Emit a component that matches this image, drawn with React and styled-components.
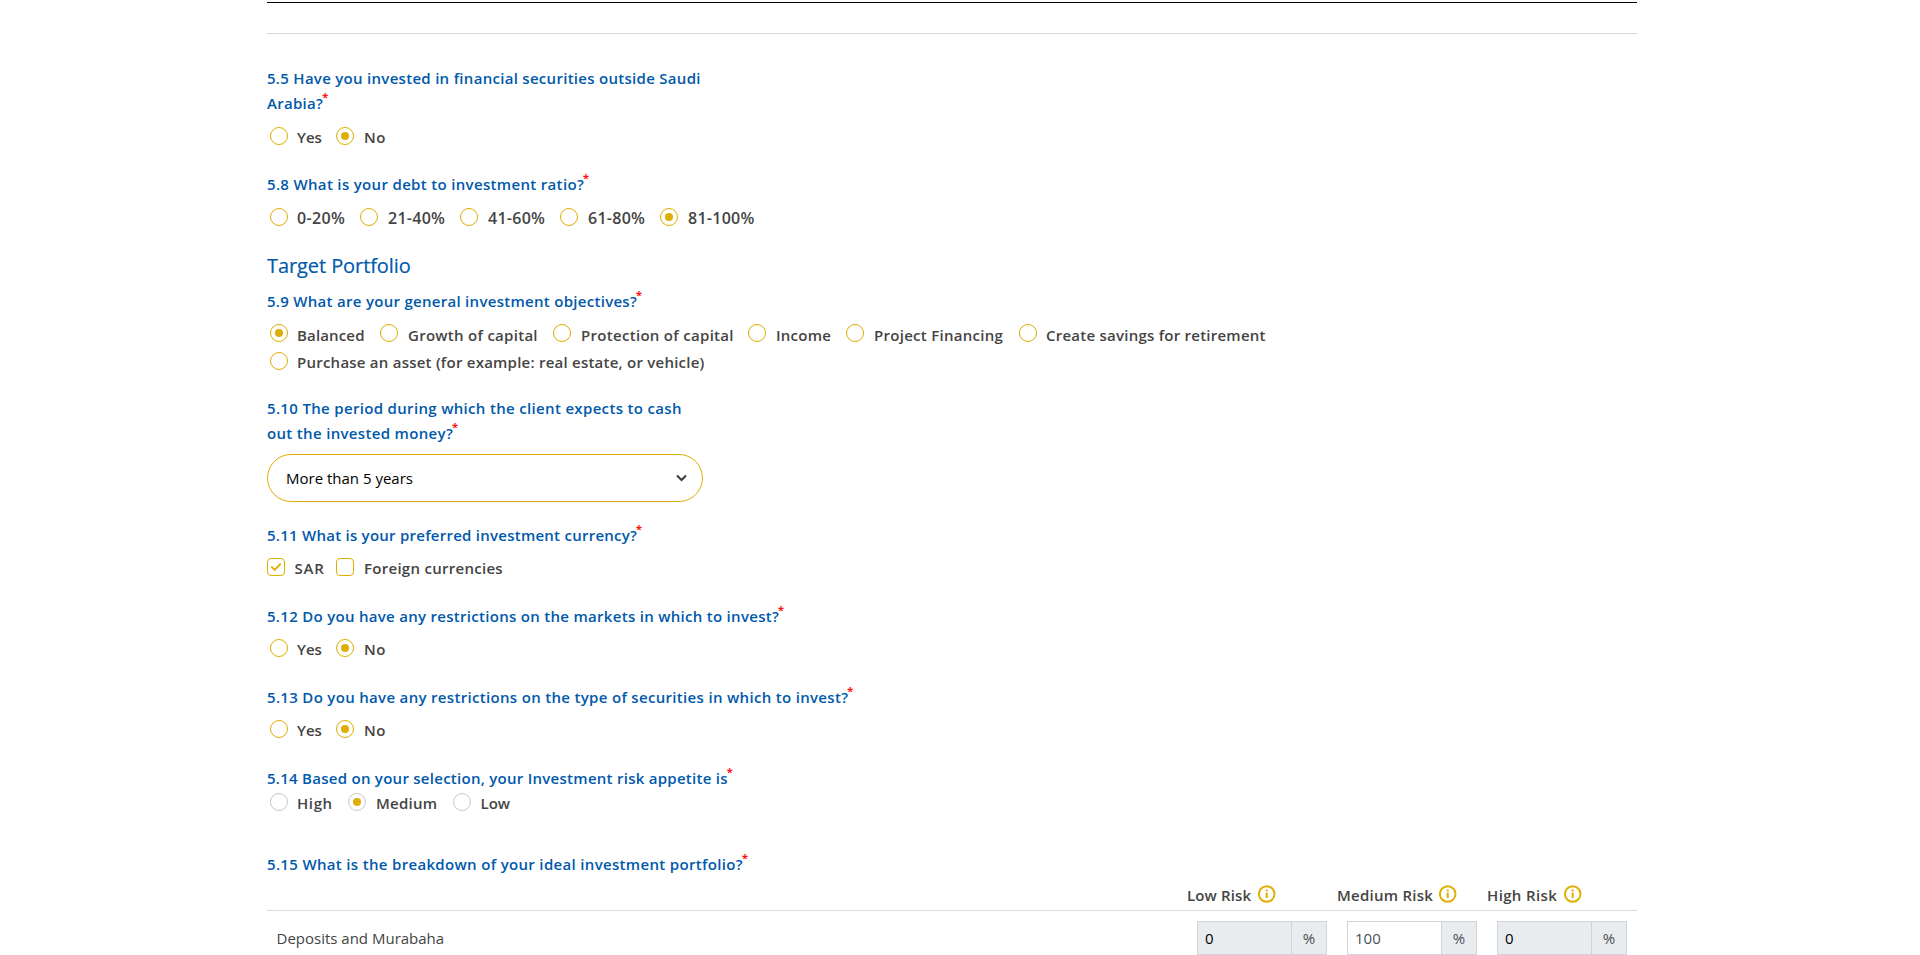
import React from "react";
import styled, { createGlobalStyle } from "styled-components";

const blue = "#0059ab";
const gold = "#deae00";
const ink = "#444444";

const GlobalStyle = createGlobalStyle`
  * { box-sizing: border-box; }
  html { overflow: hidden; }
  body {
    margin: 0;
    background: #fff;
    color: ${ink};
    font-family: "Open Sans", "Noto Sans", sans-serif;
    font-size: 15px;
    line-height: 25px;
  }
`;

const Page = styled.main`
  width: 1370px;
  height: 955px;
  margin-left: 267px;
  padding-top: 2px;
  overflow: hidden;
`;

const SolidRule = styled.div`
  height: 1px;
  background: #000;
`;

const SoftRule = styled.div`
  height: 1px;
  margin-top: 30px;
  background: #d9d9d9;
`;

const Section = styled.section`
  margin-top: ${(p) => p.$top}px;
`;

const Heading = styled.h2`
  margin: 22px 0 0;
  height: 27px;
  font-size: 20px;
  line-height: 26px;
  font-weight: 400;
  letter-spacing: -0.08px;
  color: ${blue};
  -webkit-text-stroke: 0.2px ${blue};
`;

const Question = styled.p`
  margin: 0;
  height: ${(p) => (p.$lines || 1) * 25}px;
  font-weight: 600;
  white-space: nowrap;
  color: ${blue};
  letter-spacing: ${(p) => p.$track || 0.3}px;
`;

const Required = styled.span`
  margin-left: -1px;
  font-size: 11px;
  font-weight: 700;
  line-height: 0;
  letter-spacing: 0;
  vertical-align: 8px;
  color: #ff1010;
`;

const OptionRow = styled.div`
  display: flex;
  height: ${(p) => p.$height || 26}px;
  margin-top: ${(p) => p.$top ?? 8}px;
  padding-left: ${(p) => (p.$flush ? 0 : 3)}px;
`;

const Option = styled.label`
  display: flex;
  flex: none;
  gap: ${(p) => p.$gap || 9}px;
  width: ${(p) => (p.$width ? `${p.$width}px` : "auto")};
`;

const OptionText = styled.span`
  font-size: ${(p) => (p.$numeric ? 16 : 15)}px;
  font-weight: 600;
  line-height: ${(p) => (p.$low ? 28 : 26)}px;
  white-space: nowrap;
  letter-spacing: ${(p) => p.$track || 0}px;
`;

const RadioMark = styled.span`
  display: flex;
  align-items: center;
  justify-content: center;
  flex: none;
  width: 18px;
  height: 18px;
  margin-top: 3px;
  border: 1px solid ${(p) => (p.$muted ? "#c8c8c8" : gold)};
  border-radius: 50%;

  &::after {
    content: "";
    width: 8px;
    height: 8px;
    border-radius: 50%;
    background: ${(p) => (p.$on ? gold : "transparent")};
  }
`;

const CheckMark = styled.span`
  display: flex;
  align-items: center;
  justify-content: center;
  flex: none;
  width: 18px;
  height: 18px;
  margin-top: 3px;
  border: 1px solid ${gold};
  border-radius: 4px;
`;

const Select = styled.div`
  display: flex;
  align-items: center;
  justify-content: space-between;
  width: 436px;
  height: 48px;
  margin-top: 8px;
  padding: 0 15px 0 18px;
  border: 1px solid ${gold};
  border-radius: 24px;
  color: #000;
`;

const HeaderRow = styled.div`
  display: grid;
  grid-template-columns: 1fr repeat(3, 150px);
  height: 34px;
  border-bottom: 1px solid #d9dcdf;
`;

const HeaderCell = styled.div`
  display: flex;
  align-items: flex-start;
  gap: ${(p) => p.$gap}px;
  font-weight: 600;
  line-height: 37px;
  white-space: nowrap;
  letter-spacing: ${(p) => p.$track}px;

  svg { margin-top: 8px; flex: none; }
`;

const BodyRow = styled.div`
  display: grid;
  grid-template-columns: 1fr repeat(3, 150px);
  padding-top: 10px;
`;

const RowLabel = styled.div`
  padding-left: 9.5px;
  line-height: 35px;
`;

const PercentField = styled.div`
  display: flex;
  width: 130px;
  height: 34px;
  margin-left: 10px;
  border: 1px solid #ced4da;
  background: #e9ecef;
  line-height: 32px;
`;

const FieldValue = styled.span`
  width: 94px;
  padding-left: 7px;
  border-right: 1px solid #ced4da;
  background: ${(p) => (p.$editable ? "#fff" : "#e9ecef")};
  color: ${(p) => (p.$editable ? "#495057" : "#000")};
`;

const FieldUnit = styled.span`
  flex: 1;
  text-align: center;
  color: #495057;
`;

const Star = () => <Required>*</Required>;

const Radio = ({ children, on, muted, width, track, low, gap, numeric }) => (
  <Option $width={width} $gap={gap}>
    <RadioMark $on={on} $muted={muted} />
    <OptionText $track={track} $low={low} $numeric={numeric}>{children}</OptionText>
  </Option>
);

const Check = ({ children, on, width, track, gap }) => (
  <Option $width={width} $gap={gap}>
    <CheckMark>
      {on && (
        <svg width="12" height="10" viewBox="0 0 12 10" fill="none">
          <path d="M1.3 4.6 4.7 7.9 10.7 1.6" stroke={gold} strokeWidth="2" />
        </svg>
      )}
    </CheckMark>
    <OptionText $track={track}>{children}</OptionText>
  </Option>
);

const YesNo = ({ top }) => (
  <OptionRow $top={top}>
    <Radio width={66}>Yes</Radio>
    <Radio on gap={10} track={0.4}>No</Radio>
  </OptionRow>
);

const InfoIcon = () => (
  <svg width="18" height="18" viewBox="0 0 18 18" fill="none">
    <circle cx="8.7" cy="9" r="7.8" stroke={gold} strokeWidth="1.9" />
    <path d="M8.7 7.6V13" stroke={gold} strokeWidth="2" />
    <path d="M8.7 4.5V6.4" stroke={gold} strokeWidth="2" />
  </svg>
);

const Percent = ({ value, editable }) => (
  <PercentField>
    <FieldValue $editable={editable}>{value}</FieldValue>
    <FieldUnit>%</FieldUnit>
  </PercentField>
);

export default function App() {
  return (
    <>
      <GlobalStyle />
      <Page>
        <SolidRule />
        <SoftRule />

        <Section $top={32}>
          <Question $lines={2} $track={0.29}>
            5.5 Have you invested in financial securities outside Saudi
            <br />
            Arabia?<Star />
          </Question>
          <YesNo />
        </Section>

        <Section $top={22}>
          <Question $track={0.33}>
            5.8 What is your debt to investment ratio?<Star />
          </Question>
          <OptionRow>
            <Radio numeric width={90} track={0.38}>0-20%</Radio>
            <Radio numeric gap={10} width={100} track={0.27}>21-40%</Radio>
            <Radio numeric gap={10} width={100} track={0.27}>41-60%</Radio>
            <Radio numeric gap={10} width={100} track={0.27}>61-80%</Radio>
            <Radio numeric gap={10} on track={0.27}>81-100%</Radio>
          </OptionRow>
        </Section>

        <Heading>Target Portfolio</Heading>

        <Section $top={9}>
          <Question $track={0.29}>
            5.9 What are your general investment objectives?<Star />
          </Question>
          <OptionRow $top={7} $height={28}>
            <Radio on low width={110} track={0.15}>Balanced</Radio>
            <Radio low gap={10} width={173} track={0.28}>Growth of capital</Radio>
            <Radio low width={195} gap={10} track={0.3}>Protection of capital</Radio>
            <Radio low width={98} gap={10} track={0.25}>Income</Radio>
            <Radio low width={173} gap={10} track={0.28}>Project Financing</Radio>
            <Radio low track={0.24}>Create savings for retirement</Radio>
          </OptionRow>
          <OptionRow $top={0}>
            <Radio track={0.235}>Purchase an asset (for example: real estate, or vehicle)</Radio>
          </OptionRow>
        </Section>

        <Section $top={21}>
          <Question $lines={2} $track={0.33}>
            5.10 The period during which the client expects to cash
            <br />
            out the invested money?<Star />
          </Question>
          <Select>
            More than 5 years
            <svg width="11" height="8" viewBox="0 0 11 8" fill="none">
              <path d="M1 1.5 5.5 6 10 1.5" stroke="#3c3c3c" strokeWidth="2" />
            </svg>
          </Select>
        </Section>

        <Section $top={21}>
          <Question $track={0.25}>
            5.11 What is your preferred investment currency?<Star />
          </Question>
          <OptionRow $top={7} $flush>
            <Check on width={69} gap={9.5} track={0.75}>SAR</Check>
            <Check gap={10} track={0.28}>Foreign currencies</Check>
          </OptionRow>
        </Section>

        <Section $top={23}>
          <Question $track={0.295}>
            5.12 Do you have any restrictions on the markets in which to invest?<Star />
          </Question>
          <YesNo top={7} />
        </Section>

        <Section $top={23}>
          <Question $track={0.32}>
            5.13 Do you have any restrictions on the type of securities in which to invest?<Star />
          </Question>
          <YesNo top={7} />
        </Section>

        <Section $top={23}>
          <Question $track={0.27}>
            5.14 Based on your selection, your Investment risk appetite is<Star />
          </Question>
          <OptionRow $top={-1}>
            <Radio muted width={78} track={0.6}>High</Radio>
            <Radio muted on gap={10} width={105} track={0.25}>Medium</Radio>
            <Radio muted gap={9.5}>Low</Radio>
          </OptionRow>
        </Section>

        <Section $top={36}>
          <Question $track={0.33}>
            5.15 What is the breakdown of your ideal investment portfolio?<Star />
          </Question>
          <HeaderRow>
            <span />
            <HeaderCell $gap={7} $track={0.15}>Low Risk <InfoIcon /></HeaderCell>
            <HeaderCell $gap={6} $track={0.25}>Medium Risk <InfoIcon /></HeaderCell>
            <HeaderCell $gap={6.5} $track={0.36}>High Risk <InfoIcon /></HeaderCell>
          </HeaderRow>
          <BodyRow>
            <RowLabel>Deposits and Murabaha</RowLabel>
            <Percent value="0" />
            <Percent value="100" editable />
            <Percent value="0" />
          </BodyRow>
        </Section>
      </Page>
    </>
  );
}
